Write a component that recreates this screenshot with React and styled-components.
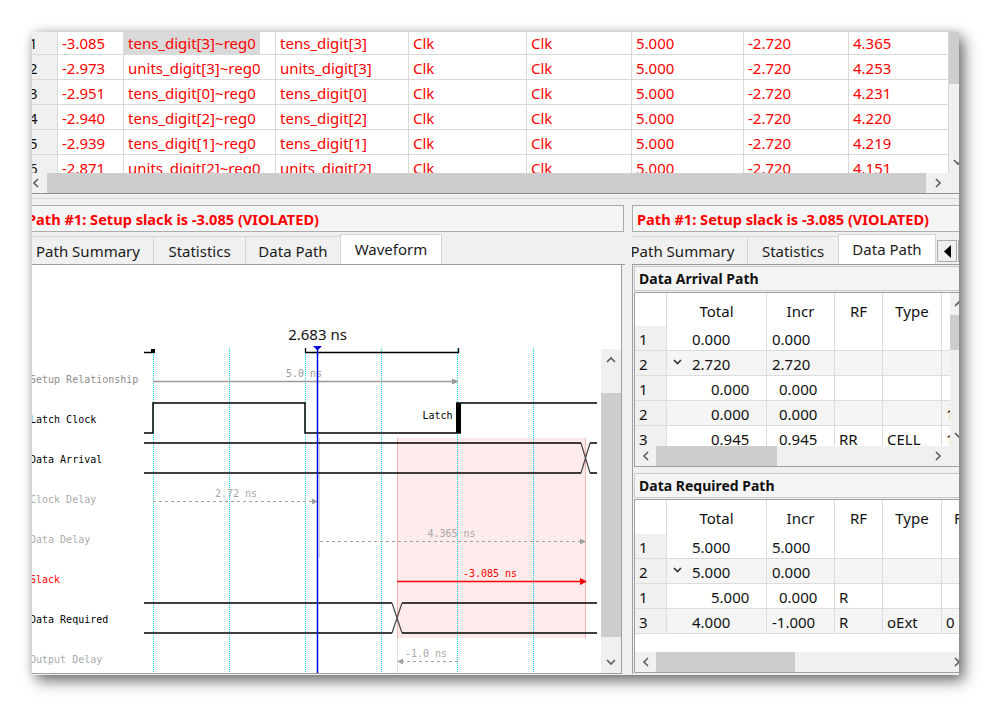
import styled, { createGlobalStyle } from 'styled-components';

const GlobalStyle = createGlobalStyle`
  html, body {
    margin: 0;
    padding: 0;
    background: #ffffff;
  }
  body {
    font-family: 'Noto Sans', 'Open Sans', sans-serif;
  }
`;

const MONO = "'DejaVu Sans Mono', 'Liberation Mono', monospace";

// ---- data ----
const results = [
  ['1', '-3.085', 'tens_digit[3]~reg0', 'tens_digit[3]', '4.365'],
  ['2', '-2.973', 'units_digit[3]~reg0', 'units_digit[3]', '4.253'],
  ['3', '-2.951', 'tens_digit[0]~reg0', 'tens_digit[0]', '4.231'],
  ['4', '-2.940', 'tens_digit[2]~reg0', 'tens_digit[2]', '4.220'],
  ['5', '-2.939', 'tens_digit[1]~reg0', 'tens_digit[1]', '4.219'],
  ['6', '-2.871', 'units_digit[2]~reg0', 'units_digit[2]', '4.151'],
];

const arrival = [
  { n: '1', total: '0.000', incr: '0.000' },
  { n: '2', alt: true, open: true, total: '2.720', incr: '2.720' },
  { n: '1', child: true, total: '0.000', incr: '0.000' },
  { n: '2', alt: true, child: true, total: '0.000', incr: '0.000', f: '1' },
  { n: '3', child: true, total: '0.945', incr: '0.945', rf: 'RR', type: 'CELL', f: '1' },
];

const required = [
  { n: '1', total: '5.000', incr: '5.000' },
  { n: '2', alt: true, open: true, total: '5.000', incr: '0.000' },
  { n: '1', child: true, total: '5.000', incr: '0.000', rf: 'R' },
  { n: '3', alt: true, total: '4.000', incr: '-1.000', rf: 'R', type: 'oExt', f: '0' },
];

const GRID_X = [153, 229, 305, 381, 457, 533];

const LABELS = [
  ['Setup Relationship', '#8d8d8d'],
  ['Latch Clock', '#000000'],
  ['Data Arrival', '#000000'],
  ['Clock Delay', '#ababab'],
  ['Data Delay', '#ababab'],
  ['Slack', '#ff0000'],
  ['Data Required', '#000000'],
  ['Output Delay', '#ababab'],
];

// ---- small drawings ----
const Chevron = ({ dir = 'left', color = '#5c5c5c' }) => {
  const paths = {
    left: 'M6 1 L2 5 L6 9',
    right: 'M2 1 L6 5 L2 9',
    up: 'M1 6 L5 2 L9 6',
    down: 'M1 2 L5 6 L9 2',
  };
  const horiz = dir === 'left' || dir === 'right';
  return (
    <svg width={horiz ? 8 : 10} height={horiz ? 10 : 8} viewBox={horiz ? '0 0 8 10' : '0 0 10 8'}>
      <path d={paths[dir]} fill="none" stroke={color} strokeWidth="1.6" />
    </svg>
  );
};

const Expand = () => (
  <svg width="9" height="6" viewBox="0 0 9 6" style={{ marginRight: 10, marginTop: -4 }}>
    <path d="M1 1 L4.5 4.5 L8 1" fill="none" stroke="#333" strokeWidth="1.7" />
  </svg>
);

const Triangle = ({ dir = 'left' }) => (
  <svg width="7" height="13" viewBox="0 0 7 13">
    <path d={dir === 'left' ? 'M7 0 L0 6.5 L7 13 Z' : 'M0 0 L7 6.5 L0 13 Z'} fill="#000" />
  </svg>
);

// dotted cyan time grid, drawn as 1px dots
const GridDots = ({ x }) => {
  const dots = [];
  for (let y = 349; y < 673; y += 2) dots.push(`M${x} ${y}h1v1h-1z`);
  return <path d={dots.join('')} fill="#00d9ea" />;
};

// ---- layout ----
const Stage = styled.div`
  width: 991px;
  height: 708px;
  box-sizing: border-box;
  padding: 32px 0 0 32px;
  overflow: hidden;
  background: #ffffff;
`;

const Window = styled.div`
  width: 927px;
  height: 643px;
  display: flex;
  flex-direction: column;
  overflow: hidden;
  background: #f0f0f0;
  box-shadow: 5px 6px 14px rgba(0, 0, 0, 0.55), 0 0 9px rgba(0, 0, 0, 0.15);
`;

const Results = styled.div`
  display: flex;
  flex-direction: column;
  flex-shrink: 0;
`;

const ResultBody = styled.div`
  display: flex;
  height: 141px;
  overflow: hidden;
  background: #ffffff;
`;

const ResultGrid = styled.div`
  width: 921px;
  flex-shrink: 0;
  margin: -2px 0 0 -4px;
`;

const ResultRow = styled.div`
  display: grid;
  grid-template-columns: 30px 66px 152px 133px 118px 105px 112px 105px 100px;
  height: 25px;
  box-sizing: border-box;
  border-bottom: 1px solid #d9d9d9;
`;

const ResultCell = styled.div`
  box-sizing: border-box;
  height: 24px;
  padding: ${(p) => (p.$flush ? '0' : '3px 0 0 4px')};
  border-right: 1px solid #d9d9d9;
  font-size: 15px;
  line-height: 21px;
  color: #ff0000;
  white-space: nowrap;
  overflow: hidden;
`;

const RowNum = styled(ResultCell)`
  padding-left: 1px;
  color: #111111;
  background: #f0f0f0;
`;

const Selected = styled.span`
  display: inline-block;
  height: 100%;
  box-sizing: border-box;
  padding: 3px 4px 0;
  background: #d9d9d9;
`;

const VScroll = styled.div`
  width: 17px;
  flex-shrink: 0;
  display: flex;
  flex-direction: column;
  background: #f0f0f0;
`;

const VThumb = styled.div`
  height: ${(p) => p.$h}px;
  margin-top: ${(p) => p.$top || 0}px;
  flex-shrink: 0;
  background: #cdcdcd;
`;

const Spacer = styled.div`
  flex: ${(p) => (p.$size ? `0 0 ${p.$size}px` : '1')};
`;

const ArrowBox = styled.div`
  width: ${(p) => (p.$w ? `${p.$w}px` : '100%')};
  height: ${(p) => (p.$h ? `${p.$h}px` : '100%')};
  margin-left: ${(p) => p.$ml || 0}px;
  flex-shrink: 0;
  display: flex;
  align-items: center;
  justify-content: center;
`;

const HScroll = styled.div`
  display: flex;
  height: 20px;
  flex-shrink: 0;
  background: #f0f0f0;
`;

const HThumb = styled.div`
  width: ${(p) => p.$w}px;
  flex-shrink: 0;
  background: #cdcdcd;
`;

const Splitter = styled.div`
  height: 4px;
  flex-shrink: 0;
  border-top: 1px solid #8f8f8f;
  border-bottom: 1px solid #d8d8d8;
`;

const Lower = styled.div`
  flex: 1;
  min-height: 0;
  display: flex;
  padding-top: 6px;
`;

const LeftPane = styled.div`
  width: 602px;
  margin-left: -9px;
  flex-shrink: 0;
  display: flex;
  flex-direction: column;
`;

const RightPane = styled.div`
  width: 345px;
  margin-left: 7px;
  flex-shrink: 0;
  display: flex;
  flex-direction: column;
  overflow: hidden;
`;

const StatusBox = styled.div`
  height: 27px;
  flex-shrink: 0;
  box-sizing: border-box;
  margin-right: ${(p) => p.$mr || 0}px;
  padding: 2px 0 0 ${(p) => p.$pl}px;
  border: 1px solid #ababab;
  background: #f5f5f5;
  color: #ff0000;
  font-size: 14.6px;
  font-weight: 700;
  line-height: 22px;
  white-space: nowrap;
  overflow: hidden;
`;

const TabRow = styled.div`
  height: 31px;
  flex-shrink: 0;
  margin: 2px 0 0 ${(p) => p.$shift || 0}px;
  box-sizing: border-box;
  display: flex;
  align-items: flex-end;
  border-bottom: 1px solid #9a9a9a;
`;

const Tab = styled.div`
  width: ${(p) => p.$w}px;
  height: ${(p) => (p.$active ? 30 : 28)}px;
  flex-shrink: 0;
  box-sizing: border-box;
  margin-left: -1px;
  padding-bottom: ${(p) => (p.$active ? 1 : 0)}px;
  display: flex;
  align-items: center;
  justify-content: center;
  border: 1px solid #d4d4d4;
  border-bottom: none;
  background: ${(p) => (p.$active ? '#ffffff' : '#f0f0f0')};
  color: #1b1b1b;
  font-size: 15px;
  white-space: nowrap;
`;

const TabArrow = styled.div`
  width: 20px;
  height: 22px;
  flex-shrink: 0;
  margin: 0 0 2px 1px;
  box-sizing: border-box;
  display: flex;
  align-items: center;
  justify-content: center;
  border: 1px solid #adadad;
  background: #f0f0f0;
`;

const WavePanel = styled.div`
  flex: 1;
  min-height: 0;
  width: 599px;
  margin-bottom: 1px;
  box-sizing: border-box;
  display: flex;
  background: #ffffff;
  border: 1px solid #9f9f9f;
  border-top: none;
`;

const WaveSvg = styled.svg`
  display: block;
  flex-shrink: 0;
`;

const WaveScroll = styled.div`
  width: 20px;
  flex-shrink: 0;
  padding-top: 84px;
  display: flex;
  flex-direction: column;
`;

const ScrollTrack = styled.div`
  flex: 1;
  display: flex;
  flex-direction: column;
  background: #f0f0f0;
`;

const DetailPanel = styled.div`
  flex: 1;
  min-height: 0;
  margin-bottom: 1px;
  padding-left: 1px;
  border-left: 1px solid #9f9f9f;
  display: flex;
  flex-direction: column;
`;

const SectionTitle = styled.div`
  height: 25px;
  flex-shrink: 0;
  margin-top: ${(p) => p.$mt}px;
  box-sizing: border-box;
  padding: 1px 0 0 4px;
  border: 1px solid #c8c8c8;
  background: #f5f5f5;
  color: #111111;
  font-size: 14px;
  font-weight: 700;
  line-height: 22px;
  white-space: nowrap;
`;

const DataTable = styled.div`
  margin-top: 1px;
  display: flex;
  flex-shrink: 0;
  border-top: 1px solid #a0a0a0;
  border-bottom: 1px solid #a0a0a0;
  border-left: 1px solid #a0a0a0;
  background: #ffffff;
`;

const TableMain = styled.div`
  width: ${(p) => p.$w}px;
  flex-shrink: 0;
  display: flex;
  flex-direction: column;
  overflow: hidden;
`;

const GridClip = styled.div`
  height: ${(p) => p.$h}px;
  overflow: hidden;
`;

const DataRow = styled.div`
  display: grid;
  grid-template-columns: 32px 100px 68px 48px 59px 74px;
  height: ${(p) => p.$height || 25}px;
  box-sizing: border-box;
  border-bottom: ${(p) => (p.$head ? 'none' : '1px solid #dcdcdc')};
  background: ${(p) => (p.$alt ? '#f5f5f5' : '#ffffff')};
`;

const DataCell = styled.div`
  display: flex;
  align-items: center;
  justify-content: ${(p) => (p.$center ? 'center' : 'flex-start')};
  padding: 2px 0 0 ${(p) => p.$pl || 0}px;
  border-right: 1px solid #dcdcdc;
  background: ${(p) => (p.$num ? '#f0f0f0' : 'transparent')};
  color: #111111;
  font-size: 15px;
  white-space: nowrap;
  overflow: hidden;
`;

// ---- parts ----
const ResultsTable = () => (
  <Results>
    <ResultBody>
      <ResultGrid>
        {results.map((r, i) => (
          <ResultRow key={r[0]}>
            <RowNum>{r[0]}</RowNum>
            <ResultCell>{r[1]}</ResultCell>
            <ResultCell $flush={i === 0}>{i === 0 ? <Selected>{r[2]}</Selected> : r[2]}</ResultCell>
            <ResultCell>{r[3]}</ResultCell>
            <ResultCell>Clk</ResultCell>
            <ResultCell>Clk</ResultCell>
            <ResultCell>5.000</ResultCell>
            <ResultCell>-2.720</ResultCell>
            <ResultCell>{r[4]}</ResultCell>
          </ResultRow>
        ))}
      </ResultGrid>
      <VScroll>
        <VThumb $h={52} />
        <Spacer />
        <ArrowBox $h={22}>
          <Chevron dir="down" />
        </ArrowBox>
      </VScroll>
    </ResultBody>
    <HScroll>
      <ArrowBox $w={22} $ml={-7}>
        <Chevron dir="left" />
      </ArrowBox>
      <HThumb $w={879} />
      <ArrowBox $w={23}>
        <Chevron dir="right" />
      </ArrowBox>
    </HScroll>
  </Results>
);

const Waveform = () => (
  <WaveSvg width="577" height="408" viewBox="24 265 577 408">
    <g fontFamily={MONO} fontSize="10">
      {LABELS.map(([t, c], i) => (
        <text key={t} x="30" y={383 + i * 40} fill={c}>
          {t}
        </text>
      ))}
    </g>

    <rect x="397" y="438" width="189" height="200" fill="#fdeaea" />
    <path d="M397.5 438V638M585.5 438V638" stroke="#f2b4b4" />

    {GRID_X.map((x) => (
      <GridDots key={x} x={x} />
    ))}
    <path d="M319.5 438V558" stroke="#d3d3d3" />
    <path d="M397.5 638V673" stroke="#e0e0e0" />

    <path d="M144 352.5H153M305.5 348V353M458.5 348V353M305 352.5H459" stroke="#000" strokeWidth="1.3" fill="none" />
    <rect x="151" y="349" width="4" height="4" fill="#000" />
    <text x="317.5" y="340" textAnchor="middle" fontFamily="'Noto Sans', sans-serif" fontSize="15" fill="#111">
      2.683 ns
    </text>

    <g fontFamily={MONO} fontSize="10" textAnchor="middle">
      <text x="304" y="376.5" fill="#9a9a9a">5.0 ns</text>
      <text x="236" y="496.5" fill="#a8a8a8">2.72 ns</text>
      <text x="451.5" y="536.5" fill="#a8a8a8">4.365 ns</text>
      <text x="490" y="576.5" fill="#ff0000">-3.085 ns</text>
      <text x="426" y="656.5" fill="#a8a8a8">-1.0 ns</text>
      <text x="452.5" y="419.3" fill="#000" textAnchor="end">Latch</text>
    </g>

    <path d="M153 381.5H454" stroke="#9a9a9a" strokeWidth="1.3" />
    <path d="M452 378.5L459 381.5L452 384.5Z" fill="#9a9a9a" />

    <path d="M144 433H153V403H305V433H456M461 403H597" stroke="#000" strokeWidth="1.5" fill="none" />
    <rect x="456" y="402.3" width="5" height="31.4" fill="#000" />

    <path d="M144 443H581M144 473H581M590 443H597M590 473H597" stroke="#000" strokeWidth="1.5" fill="none" />
    <path d="M581 443L590 473M581 473L590 443" stroke="#444" strokeWidth="1.2" fill="none" />

    <path d="M153 501.5H313" stroke="#a0a0a0" strokeDasharray="3 3" />
    <path d="M312 498.5L318 501.5L312 504.5Z" fill="#a0a0a0" />

    <path d="M320 541.5H581" stroke="#a0a0a0" strokeDasharray="3 3" />
    <path d="M580 538.5L586 541.5L580 544.5Z" fill="#a0a0a0" />

    <path d="M397 581.5H582" stroke="#ff0000" strokeWidth="1.4" />
    <path d="M580 578L587 581.5L580 585Z" fill="#ff0000" />

    <path d="M144 603H392M144 633H392M402 603H597M402 633H597" stroke="#000" strokeWidth="1.5" fill="none" />
    <path d="M392 603L402 633M392 633L402 603" stroke="#444" strokeWidth="1.2" fill="none" />

    <path d="M401 661.5H458" stroke="#a0a0a0" strokeDasharray="3 3" />
    <path d="M403 658.5L397 661.5L403 664.5Z" fill="#a0a0a0" />

    <path d="M317.5 349V673" stroke="#0000dd" strokeWidth="1.5" />
    <path d="M313 346H322L317.5 350.5Z" fill="#0000dd" />
  </WaveSvg>
);

const DetailRow = ({ r }) => (
  <DataRow $alt={r.alt}>
    <DataCell $num $pl={4}>{r.n}</DataCell>
    <DataCell $pl={r.child ? 44 : r.open ? 6 : 25}>
      {r.open && <Expand />}
      {r.total}
    </DataCell>
    <DataCell $pl={r.child ? 12 : 5}>{r.incr}</DataCell>
    <DataCell $pl={4}>{r.rf}</DataCell>
    <DataCell $pl={4}>{r.type}</DataCell>
    <DataCell $pl={4}>{r.f}</DataCell>
  </DataRow>
);

const DetailTable = ({ rows, headH, bodyH, width, thumbW, rightW, vscroll }) => (
  <DataTable>
    <TableMain $w={width}>
      <DataRow $head $height={headH}>
        <DataCell />
        <DataCell $center>Total</DataCell>
        <DataCell $center>Incr</DataCell>
        <DataCell $center>RF</DataCell>
        <DataCell $center>Type</DataCell>
        <DataCell $center>Fanout</DataCell>
      </DataRow>
      <GridClip $h={bodyH}>
        {rows.map((r, i) => (
          <DetailRow key={i} r={r} />
        ))}
      </GridClip>
      <HScroll>
        <ArrowBox $w={21}>
          <Chevron dir="left" />
        </ArrowBox>
        <HThumb $w={thumbW} />
        <Spacer />
        <ArrowBox $w={rightW}>
          <Chevron dir="right" />
        </ArrowBox>
      </HScroll>
    </TableMain>
    {vscroll && (
      <VScroll>
        <ArrowBox $h={22}>
          <Chevron dir="up" />
        </ArrowBox>
        <VThumb $h={35} />
        <Spacer />
        <ArrowBox $h={22}>
          <Chevron dir="down" />
        </ArrowBox>
        <ArrowBox $h={20} />
      </VScroll>
    )}
  </DataTable>
);

const App = () => (
  <Stage>
    <GlobalStyle />
    <Window>
      <ResultsTable />
      <Splitter />
      <Lower>
        <LeftPane>
          <StatusBox $pl={3} $mr={1}>Path #1: Setup slack is -3.085 (VIOLATED)</StatusBox>
          <TabRow>
            <Tab $w={132}>Path Summary</Tab>
            <Tab $w={93}>Statistics</Tab>
            <Tab $w={96}>Data Path</Tab>
            <Tab $w={102} $active>Waveform</Tab>
          </TabRow>
          <WavePanel>
            <Waveform />
            <WaveScroll>
              <ScrollTrack>
                <ArrowBox $h={22}>
                  <Chevron dir="up" />
                </ArrowBox>
                <Spacer $size={22} />
                <VThumb $h={244} />
                <Spacer />
                <ArrowBox $h={22}>
                  <Chevron dir="down" />
                </ArrowBox>
              </ScrollTrack>
            </WaveScroll>
          </WavePanel>
        </LeftPane>

        <RightPane>
          <StatusBox $pl={4}>Path #1: Setup slack is -3.085 (VIOLATED)</StatusBox>
          <TabRow $shift={-14}>
            <Tab $w={131}>Path Summary</Tab>
            <Tab $w={92}>Statistics</Tab>
            <Tab $w={98} $active>Data Path</Tab>
            <TabArrow>
              <Triangle dir="left" />
            </TabArrow>
            <TabArrow>
              <Triangle dir="right" />
            </TabArrow>
          </TabRow>
          <DetailPanel>
            <SectionTitle $mt={1}>Data Arrival Path</SectionTitle>
            <DetailTable rows={arrival} headH={33} bodyH={120} width={315} thumbW={121} rightW={24} vscroll />
            <SectionTitle $mt={6}>Data Required Path</SectionTitle>
            <DetailTable rows={required} headH={34} bodyH={118} width={334} thumbW={139} rightW={24} />
          </DetailPanel>
        </RightPane>
      </Lower>
    </Window>
  </Stage>
);

export default App;
